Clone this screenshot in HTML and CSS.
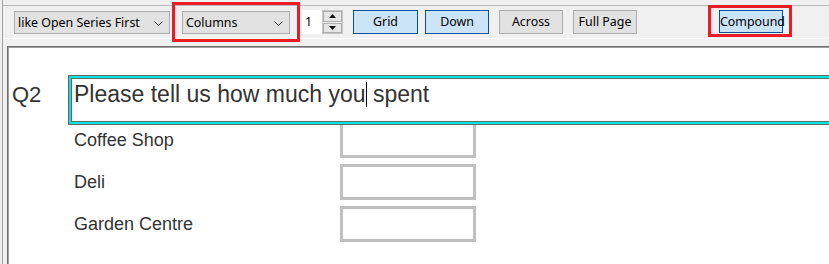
FILE: index.html
```html
<!DOCTYPE html>
<html>
<head>
<meta charset="utf-8">
<link rel="stylesheet" href="styles.css">
</head>
<body>
<div class="window">
  <div class="toolbar">
    <div class="select sel-series"><span>like Open Series First</span><svg class="chev" width="9" height="5" viewBox="0 0 9 5"><path d="M0.5 0.5 L4.5 4.5 L8.5 0.5" fill="none" stroke="#444" stroke-width="1"/></svg></div>
    <div class="hl hl-cols"><div class="select sel-cols"><span>Columns</span><svg class="chev" width="9" height="5" viewBox="0 0 9 5"><path d="M0.5 0.5 L4.5 4.5 L8.5 0.5" fill="none" stroke="#444" stroke-width="1"/></svg></div></div>
    <div class="spin">
      <div class="spin-input">1</div>
      <div class="spin-btns">
        <div class="spin-btn"><svg width="7" height="4" viewBox="0 0 7 4"><path d="M3.5 0 L7 4 L0 4 Z" fill="#111"/></svg></div>
        <div class="spin-btn"><svg width="7" height="4" viewBox="0 0 7 4"><path d="M0 0 L7 0 L3.5 4 Z" fill="#111"/></svg></div>
      </div>
    </div>
    <div class="btn btn-on b-grid">Grid</div>
    <div class="btn btn-on b-down">Down</div>
    <div class="btn b-across">Across</div>
    <div class="btn b-full">Full Page</div>
    <div class="hl hl-comp"><div class="btn btn-on b-comp">Compound</div></div>
  </div>
  <div class="content">
    <div class="qrow">
      <div class="qnum">Q2</div>
      <div class="qbox">Please tell us how much you<span class="caret"></span> spent</div>
    </div>
    <div class="rows">
      <div class="row"><div class="label">Coffee Shop</div><div class="field"></div></div>
      <div class="row"><div class="label">Deli</div><div class="field"></div></div>
      <div class="row"><div class="label">Garden Centre</div><div class="field"></div></div>
    </div>
  </div>
</div>
</body>
</html>
```
FILE: styles.css
```css
html, body {
  margin: 0;
  padding: 0;
  background: #f0f0f0;
  height: 100%;
  overflow: hidden;
}
.window {
  margin-left: 2px;
  border-left: 1px solid #a0a0a0;
  height: 100%;
  display: flex;
  flex-direction: column;
}
.toolbar {
  margin-top: 5px;
  border-top: 1px solid #b9b9b9;
  border-bottom: 1px solid #ffffff;
  display: flex;
  align-items: flex-start;
  padding-left: 11px;
  padding-top: 4px;
  box-sizing: border-box;
  height: 34px;
  font-family: "Noto Sans", "Open Sans", sans-serif;
  font-size: 12.4px;
  color: #000;
}
.select {
  height: 23px;
  margin-top: 1px;
  box-sizing: border-box;
  background: #e1e1e1;
  border: 1px solid #adadad;
  display: flex;
  align-items: center;
  justify-content: space-between;
  padding: 0 6px 0 3px;
  line-height: 21px;
}
.sel-series { width: 156px; }
.sel-cols { width: 108px; }
.chev { display: block; margin-top: 1px; }
.hl { position: relative; }
.hl::after {
  content: "";
  position: absolute;
  border: 3px solid #ec1c24;
  pointer-events: none;
}
.hl-cols { margin-left: 12px; }
.hl-cols::after { left: -10px; right: -10px; top: -8px; bottom: -8px; }
.hl-comp { margin-left: 82px; }
.hl-comp::after { left: -11px; right: -9px; top: -5px; bottom: -4px; }
.spin {
  margin-left: 12px;
  display: flex;
  height: 24px;
}
.spin-input {
  width: 20px;
  height: 24px;
  background: #fff;
  box-sizing: border-box;
  padding-left: 3px;
  line-height: 23px;
}
.spin-btns {
  width: 21px;
  height: 24px;
  box-sizing: border-box;
  border: 1px solid #c4c4c4;
  background: #f0f0f0;
  display: flex;
  flex-direction: column;
  gap: 1px;
}
.spin-btn {
  flex: 1;
  background: #e5e5e5;
  border: 1px solid #adadad;
  display: flex;
  align-items: center;
  justify-content: center;
}
.btn {
  height: 24px;
  box-sizing: border-box;
  width: 64px;
  background: #e1e1e1;
  border: 1px solid #adadad;
  text-align: center;
  line-height: 22px;
}
.btn-on {
  background: #cce4f7;
  border-color: #005499;
}
.b-grid { width: 65px; margin-left: 10px; }
.b-down { margin-left: 7px; }
.b-across { margin-left: 10px; }
.b-full { margin-left: 10px; }
.b-comp { height: 23px; line-height: 21px; }
.content {
  flex: 1;
  margin-top: 7px;
  margin-left: 4px;
  background: #fff;
  border-top: 1px solid #6f6f6f;
  border-left: 1px solid #6f6f6f;
  box-shadow: inset 1px 1px 0 #a0a0a0;
  padding-top: 28px;
  padding-left: 4px;
  overflow: hidden;
  font-family: "Liberation Sans", Arial, sans-serif;
  color: #333;
}
.qrow {
  display: flex;
  align-items: baseline;
}
.qnum {
  width: 56px;
  font-size: 22px;
  flex: none;
}
.qbox {
  position: relative;
  z-index: 1;
  flex: none;
  width: 800px;
  height: 50px;
  box-sizing: border-box;
  border: 1px solid #666;
  box-shadow: inset 0 0 0 2px #00e6e6, inset 0 0 0 3px #666;
  background: #fff;
  padding: 5px 0 0 5px;
  font-size: 23px;
  line-height: 26px;
}
.caret {
  display: inline-block;
  width: 1px;
  height: 25px;
  background: #000;
  vertical-align: -5px;
}
.rows {
  margin-top: -3px;
  margin-left: 62px;
  display: flex;
  flex-direction: column;
  gap: 6px;
}
.row {
  display: flex;
  align-items: center;
  height: 36px;
}
.label {
  width: 266px;
  font-size: 18px;
  line-height: 36px;
}
.field {
  width: 136px;
  height: 36px;
  box-sizing: border-box;
  border: 3px solid #c0c0c0;
  background: #fff;
}
```
